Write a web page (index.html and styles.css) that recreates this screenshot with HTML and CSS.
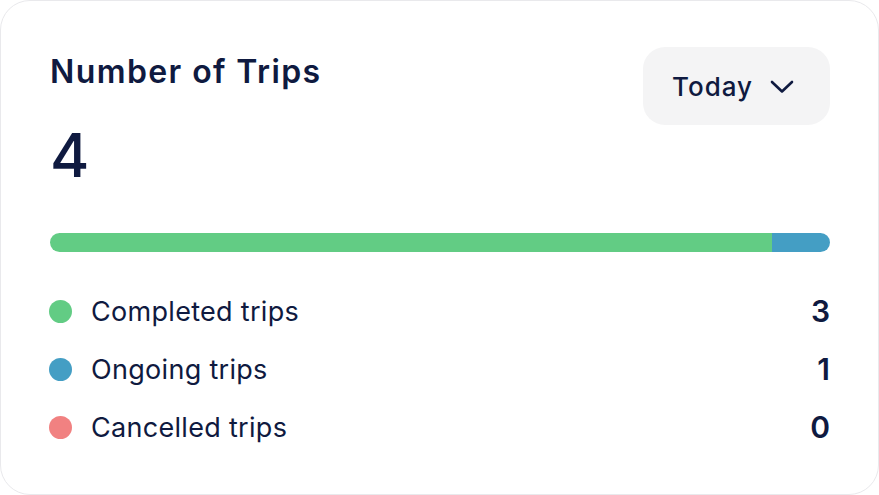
FILE: index.html
```html
<!DOCTYPE html>
<html lang="en">
<head>
<meta charset="utf-8">
<title>Number of Trips</title>
<link rel="stylesheet" href="styles.css">
</head>
<body>
<div class="card">
  <div class="header">
    <h1 class="title">Number of Trips</h1>
    <button class="period">
      <span>Today</span>
      <svg class="chevron" width="24" height="14" viewBox="0 0 24 14" aria-hidden="true">
        <path d="M2 2 L12 11.5 L22 2" fill="none" stroke="#0f1a40" stroke-width="2.6" stroke-linecap="round" stroke-linejoin="round"/>
      </svg>
    </button>
  </div>
  <div class="total">4</div>
  <div class="bar">
    <div class="seg completed" style="width: 92.6%"></div>
    <div class="seg ongoing" style="width: 7.4%"></div>
  </div>
  <ul class="legend">
    <li class="row"><span class="dot completed"></span><span class="label">Completed trips</span><span class="count">3</span></li>
    <li class="row"><span class="dot ongoing"></span><span class="label">Ongoing trips</span><span class="count">1</span></li>
    <li class="row"><span class="dot cancelled"></span><span class="label">Cancelled trips</span><span class="count">0</span></li>
  </ul>
</div>
</body>
</html>
```
FILE: styles.css
```css
html, body {
  margin: 0;
  padding: 0;
  background: #ffffff;
}

body {
  font-family: "Inter", "Liberation Sans", sans-serif;
  color: #0f1a40;
}

.card {
  box-sizing: border-box;
  width: 879px;
  height: 495px;
  background: #ffffff;
  border: 1px solid #e9e9ec;
  border-radius: 30px;
  padding: 46px 48px 0 49px;
  display: flex;
  flex-direction: column;
}

.header {
  display: flex;
  justify-content: space-between;
  align-items: flex-start;
  height: 78px;
}

.title {
  margin: 5px 0 0 0;
  font-size: 32px;
  line-height: 40px;
  font-weight: 600;
  letter-spacing: 1.4px;
}

.period {
  display: flex;
  align-items: center;
  gap: 17px;
  box-sizing: border-box;
  width: 187px;
  height: 78px;
  padding: 0 0 0 29px;
  border: none;
  border-radius: 22px;
  background: #f4f4f5;
  font-family: "Inter", "Liberation Sans", sans-serif;
  font-size: 26px;
  font-weight: 500;
  letter-spacing: 1px;
  color: #0f1a40;
  cursor: pointer;
}

.chevron {
  display: block;
  margin-top: 2px;
}

.total {
  margin-top: 0;
  font-size: 60px;
  line-height: 60px;
  font-weight: 500;
}

.bar {
  display: flex;
  margin-top: 48px;
  height: 19px;
  border-radius: 10px;
  overflow: hidden;
}

.seg {
  height: 100%;
}

.completed {
  background: #62cc84;
}

.ongoing {
  background: #449ec4;
}

.cancelled {
  background: #f18181;
}

.legend {
  list-style: none;
  margin: 30px 0 0 -1px;
  padding: 0;
}

.row {
  display: flex;
  align-items: center;
  height: 58px;
}

.dot {
  width: 23px;
  height: 23px;
  border-radius: 50%;
  flex: none;
}

.label {
  margin-left: 19px;
  font-size: 27px;
  font-weight: 400;
  letter-spacing: 0.3px;
  flex: 1;
}

.count {
  font-size: 30px;
  font-weight: 600;
}
```
